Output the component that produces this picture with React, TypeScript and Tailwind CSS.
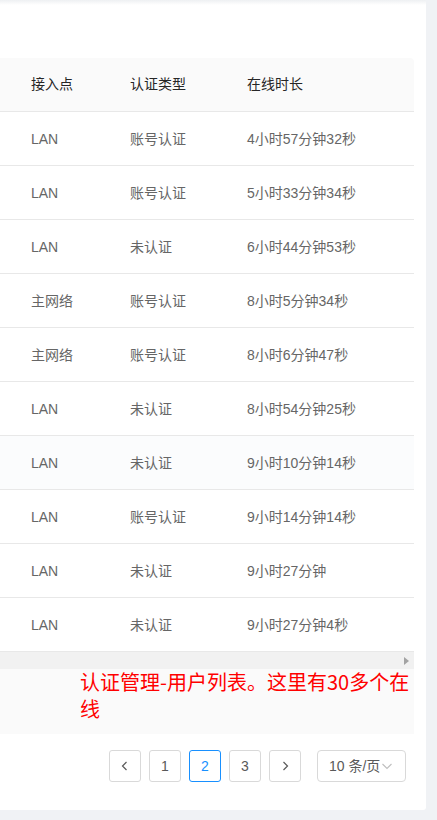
import React from 'react';

const rows = [
  ['LAN', '账号认证', '4小时57分钟32秒'],
  ['LAN', '账号认证', '5小时33分钟34秒'],
  ['LAN', '未认证', '6小时44分钟53秒'],
  ['主网络', '账号认证', '8小时5分钟34秒'],
  ['主网络', '账号认证', '8小时6分钟47秒'],
  ['LAN', '未认证', '8小时54分钟25秒'],
  ['LAN', '未认证', '9小时10分钟14秒'],
  ['LAN', '账号认证', '9小时14分钟14秒'],
  ['LAN', '未认证', '9小时27分钟'],
  ['LAN', '未认证', '9小时27分钟4秒'],
];

const font = { fontFamily: '"Liberation Sans", "Noto Sans CJK SC", sans-serif' };

function PageBtn({ children, active }: { children: React.ReactNode; active?: boolean }) {
  return (
    <div
      className={`w-[32px] h-[32px] flex items-center justify-center rounded-[3px] border text-[14px] bg-white ${
        active ? 'border-[#1890ff] text-[#1890ff]' : 'border-[#d9d9d9] text-[#595959]'
      }`}
    >
      {children}
    </div>
  );
}

export default function App() {
  return (
    <div className="w-[437px] h-[820px] bg-[#f0f2f5] overflow-hidden" style={font}>
      <div className="relative w-[426px] h-[810px] bg-white rounded-br-[3px] flex flex-col">
        <div className="h-[5px] bg-gradient-to-b from-[#eef0f2] to-white" />
        <div className="h-[53px]" />
        <div className="w-[414px]">
          <div className="grid grid-cols-[15px_99px_117px_1fr] h-[54px] items-center bg-[#fafafa] border-b border-[#e8e8e8] rounded-tr-[4px] text-[14px] text-[#262626]">
            <div />
            <div className="px-[16px]">接入点</div>
            <div className="px-[16px]">认证类型</div>
            <div className="px-[16px]">在线时长</div>
          </div>
          {rows.map((r, i) => (
            <div
              key={i}
              className={`grid grid-cols-[15px_99px_117px_1fr] h-[54px] items-center border-b border-[#e8e8e8] text-[14px] text-[#666666] ${
                i === 6 ? 'bg-[#fbfcfd]' : ''
              }`}
            >
              <div />
              <div className="px-[16px] pt-[1px]">{r[0]}</div>
              <div className="px-[16px] pt-[1px]">{r[1]}</div>
              <div className="px-[16px] pt-[1px]">{r[2]}</div>
            </div>
          ))}
          <div className="h-[17px] bg-[#f1f1f1] flex items-center justify-end pr-[5px]">
            <svg width="5" height="8" viewBox="0 0 5 8">
              <path d="M0 0 L5 4 L0 8 Z" fill="#a3a3a3" />
            </svg>
          </div>
          <div className="h-[65px] bg-[#fafafa]" />
        </div>
        <div className="flex items-center gap-[8px] mt-[16px] pl-[109px]">
          <PageBtn>
            <svg width="14" height="14" viewBox="0 0 14 14" fill="none" stroke="#595959" strokeWidth="1.2">
              <path d="M8.5 3 L4.5 7 L8.5 11" />
            </svg>
          </PageBtn>
          <PageBtn>1</PageBtn>
          <PageBtn active>2</PageBtn>
          <PageBtn>3</PageBtn>
          <PageBtn>
            <svg width="14" height="14" viewBox="0 0 14 14" fill="none" stroke="#595959" strokeWidth="1.2">
              <path d="M5.5 3 L9.5 7 L5.5 11" />
            </svg>
          </PageBtn>
          <div className="ml-[8px] w-[89px] h-[32px] border border-[#d9d9d9] rounded-[4px] flex items-center pl-[11px] pr-[6px] text-[14px] text-[#595959]">
            <span>10 条/页</span>
            <svg className="ml-[1px]" width="12" height="12" viewBox="0 0 12 12" fill="none" stroke="#bfbfbf" strokeWidth="1.1">
              <path d="M1.5 4 L6 8.5 L10.5 4" />
            </svg>
          </div>
        </div>
        <div
          className="absolute left-[80px] top-[668px] w-[340px] text-[20px] leading-[27px] text-[#ff0000]"
          style={{ fontFamily: '"Noto Sans CJK SC", sans-serif' }}
        >
          认证管理-用户列表。这里有30多个在线
        </div>
      </div>
    </div>
  );
}
